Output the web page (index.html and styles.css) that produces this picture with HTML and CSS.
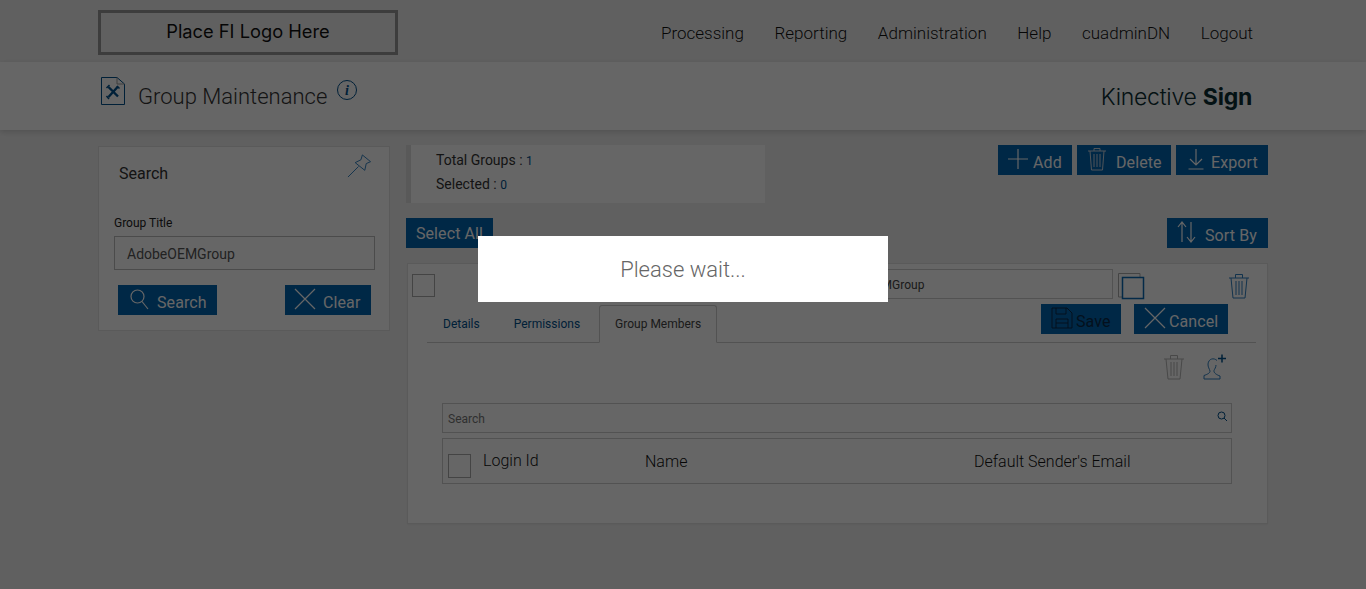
FILE: index.html
```html
<!DOCTYPE html>
<html lang="en">
<head>
<meta charset="utf-8">
<title>Group Maintenance</title>
<link rel="stylesheet" href="styles.css">
</head>
<body>
<header class="topbar">
  <div class="wrap topbar-inner">
    <div class="logo-box">Place FI Logo Here</div>
    <nav class="nav">
      <a>Processing</a><a>Reporting</a><a>Administration</a><a>Help</a><a>cuadminDN</a><a>Logout</a>
    </nav>
  </div>
</header>
<section class="subbar">
  <div class="wrap subbar-inner">
    <svg class="page-icon" width="26" height="30" viewBox="0 0 26 30" fill="none">
      <path d="M1.5 1.5H17L24.5 8V28.5H1.5Z" stroke="#00508c" stroke-width="1"/>
      <path d="M17 1.5V8H24.5" stroke="#999" stroke-width="1"/>
      <path d="M8.5 11L18 20.500M18 10.500L8.500 21" stroke="#00508c" stroke-width="2.400"/>
      <path d="M6.500 12L9.500 9M17 10L19.500 12.500M6.500 20L9 23" stroke="#00508c" stroke-width="1.500"/>
    </svg>
    <h1 class="page-title">Group Maintenance</h1>
    <svg class="info-icon" width="22" height="22" viewBox="0 0 22 22" fill="none">
      <circle cx="11" cy="11" r="9.5" stroke="#00508c" stroke-width="1"/>
      <text x="11" y="16" text-anchor="middle" class="info-i">i</text>
    </svg>
    <div class="brand">Kinective <b>Sign</b></div>
  </div>
</section>
<main class="wrap content">
  <aside class="panel">
    <div class="panel-head">
      <span>Search</span>
      <svg width="25" height="26" viewBox="0 0 26 26" fill="none" stroke="#2f7fc0" stroke-width="1">
        <path d="M16 1.500L24.500 8.500L20 10.500L18.500 17.500L8.500 9.500L14.500 6.500Z"/>
        <path d="M12 13.500L1 24.500"/>
      </svg>
    </div>
    <label class="field-label">Group Title</label>
    <div class="text-input">AdobeOEMGroup</div>
    <div class="panel-actions">
      <button class="btn btn-search">
        <svg width="20" height="24" viewBox="0 0 20 24" fill="none" stroke="#fff" stroke-width="1.200"><circle cx="8.500" cy="9.500" r="6.500"/><path d="M13 14.500L19 22"/></svg>
        <span class="lbl">Search</span>
      </button>
      <button class="btn btn-clear">
        <svg width="22" height="22" viewBox="0 0 22 22" fill="none" stroke="#fff" stroke-width="1.200"><path d="M1 1L21 21M21 1L1 21"/></svg>
        <span class="lbl">Clear</span>
      </button>
    </div>
  </aside>
  <section class="main-col">
    <div class="top-row">
      <div class="stats">
        <div>Total Groups : <span class="num">1</span></div>
        <div>Selected : <span class="num">0</span></div>
      </div>
      <div class="actions">
        <button class="btn btn-add">
          <svg width="22" height="22" viewBox="0 0 22 22" fill="none" stroke="#fff" stroke-width="1.200"><path d="M11 1V21M1 11H21"/></svg>
          <span class="lbl">Add</span>
        </button>
        <button class="btn btn-delete">
          <svg class="trash-b" width="20" height="24" viewBox="0 0 20 24" fill="none" stroke="#c8d4de" stroke-width="1"><path d="M1 4H19M7 4V1.500H13V4M3 4L4.500 23H15.500L17 4M7 7V20M10 7V20M13 7V20"/></svg>
          <span class="lbl">Delete</span>
        </button>
        <button class="btn btn-export">
          <svg width="16" height="22" viewBox="0 0 16 22" fill="none" stroke="#fff" stroke-width="1.200"><path d="M8 1V17M2 11L8 17L14 11M0.500 21H15.500"/></svg>
          <span class="lbl">Export</span>
        </button>
      </div>
    </div>
    <div class="second-row">
      <button class="btn btn-select">Select All</button>
      <button class="btn btn-sort">
        <svg width="20" height="24" viewBox="0 0 20 24" fill="none" stroke="#fff" stroke-width="1.200"><path d="M5 22V2M1 7L5 2L9 7M14 2V22M10 17L14 22L18 17"/></svg>
        <span class="lbl">Sort By</span>
      </button>
    </div>
    <article class="card">
      <div class="card-row">
        <span class="check"></span>
        <div class="title-input">AdobeOEMGroup</div>
        <svg class="copy-icon" width="27" height="27" viewBox="0 0 27 27" fill="none">
          <path d="M4 24H0.500V0.500H22V4" stroke="#aaa" stroke-width="1"/>
          <rect x="4.500" y="4.500" width="21" height="21" stroke="#0a6ab5" stroke-width="1.500"/>
        </svg>
        <svg class="trash-r" width="22" height="26" viewBox="0 0 22 26" fill="none" stroke="#2f7fc0" stroke-width="1"><path d="M1 5H21M7.500 5V1.500H14.500V5M3 5L5 25H17L19 5M8 8V22M11 8V22M14 8V22"/></svg>
      </div>
      <div class="tabs-row">
        <div class="tabs">
          <a class="tab">Details</a>
          <a class="tab">Permissions</a>
          <a class="tab active">Group Members</a>
        </div>
        <div class="tab-actions">
          <button class="btn btn-save">
            <svg width="22" height="22" viewBox="0 0 22 22" fill="none" stroke="#0a2a4a" stroke-width="1"><path d="M1 1H16L21 6V21H1ZM5 1V7H15V1M5 21V12H17V21M5 16H17"/></svg>
            <span class="lbl">Save</span>
          </button>
          <button class="btn btn-cancel">
            <svg width="22" height="22" viewBox="0 0 22 22" fill="none" stroke="#fff" stroke-width="1.200"><path d="M1 1L21 21M21 1L1 21"/></svg>
            <span class="lbl">Cancel</span>
          </button>
        </div>
      </div>
      <div class="member-tools">
        <svg width="22" height="26" viewBox="0 0 22 26" fill="none" stroke="#b5b5b5" stroke-width="1"><path d="M1 5H21M7.500 5V1.500H14.500V5M3 5L5 25H17L19 5M8 8V22M11 8V22M14 8V22"/></svg>
        <svg width="24" height="26" viewBox="0 0 24 26" fill="none" stroke="#2f7fc0" stroke-width="1"><path d="M14 6.500C11 3.500 5.500 4.500 5 10C4.800 13 6.500 15 7 17C7.300 19 4 20.500 1 21.500V25H17V22C14 21 10.500 19 11 16.500C11.500 15 13 13.500 13 11"/><path d="M19 0.500V8.500M15 4.500H23" stroke="#00508c" stroke-width="1.500"/></svg>
      </div>
      <div class="member-search">
        <span>Search</span>
        <svg class="member-search-icon" width="11" height="11" viewBox="0 0 11 11" fill="none" stroke="#00508c" stroke-width="1"><circle cx="4.500" cy="4.500" r="3.500"/><path d="M7 7L10 10"/></svg>
      </div>
      <div class="table-head">
        <span class="check check-head"></span>
        <span class="col-login">Login Id</span>
        <span class="col-name">Name</span>
        <span class="col-email">Default Sender's Email</span>
      </div>
    </article>
  </section>
</main>
<div class="overlay">
  <div class="modal">Please wait...</div>
</div>
</body>
</html>
```
FILE: styles.css
```css
* { box-sizing: border-box; }
html, body { margin: 0; height: 100%; }
body { background: #f1f1f1; font-family: Roboto, "Liberation Sans", sans-serif; color: #222; overflow: hidden; }
.wrap { width: 1170px; margin: 0 auto; }
.topbar { height: 62px; background: #f1f1f1; }
.topbar-inner { display: flex; justify-content: space-between; padding-top: 10px; }
.logo-box { width: 300px; height: 45px; border: 3px solid #999; display: flex; align-items: center; justify-content: center; padding-bottom: 3px; font: 400 18.300px Inter, sans-serif; color: #111; }
.nav { display: flex; gap: 30.600px; padding: 13px 15px 0 0; font-size: 17px; font-weight: 300; color: #111; }
.subbar { height: 68px; background: #fff; box-shadow: 0 2px 6px rgba(0,0,0,.16); }
.subbar-inner { display: flex; align-items: flex-start; }
.page-icon { margin: 14px 0 0 2px; }
.page-title { margin: 21px 0 0 12px; font-size: 22px; line-height: 28px; font-weight: 300; color: #333; }
.info-icon { margin: 17px 0 0 9px; }
.info-i { font: italic 700 14px "Liberation Serif", serif; fill: #00508c; }
.brand { margin: 21px 16px 0 auto; font: 300 23px/28px Inter, sans-serif; color: #0b2e33; letter-spacing: -.25px; }
.brand b { font-weight: 700; }
.content { display: flex; align-items: flex-start; padding-top: 16px; gap: 17px; }
.panel { width: 292px; height: 185px; background: #fff; border: 1px solid #e2e2e2; padding: 0 15px; flex: none; }
.panel-head { display: flex; justify-content: space-between; padding: 6px 2px 0 5px; height: 66px; font-size: 16px; color: #333; }
.panel-head span { margin-top: 11px; }
.field-label { display: block; font-size: 12px; line-height: 14px; color: #222; margin-top: 3px; }
.text-input { margin-top: 6px; width: 261px; height: 34px; border: 1px solid #bbb; padding: 0 12px; font-size: 14px; line-height: 34px; color: #555; background: #fff; }
.panel-actions { display: flex; justify-content: space-between; padding: 15px 4px 0; margin-right: -1px; width: 261px; }
.btn { display: inline-flex; align-items: center; height: 30px; border: 0; padding: 0; background: #0064b0; color: #fff; font: 400 16px Roboto, sans-serif; letter-spacing: .1px; white-space: nowrap; }
.btn svg { flex: none; margin-top: -2px; }
.lbl { padding-top: 4px; }
.btn-search { width: 99px; padding-left: 11px; gap: 8px; }
.btn-clear { width: 86px; padding-left: 9px; gap: 7px; }
.main-col { flex: 1; min-width: 0; }
.top-row { display: flex; justify-content: space-between; align-items: flex-start; margin-top: -1px; }
.stats { width: 359px; height: 58px; background: #fff; border-left: 5px solid #dedede; padding: 3.500px 0 0 25px; font-size: 14px; line-height: 23.500px; color: #333; margin-left: -1px; }
.num { font-size: 12px; color: #00508c; }
.actions { display: flex; gap: 5px; }
.btn-add { width: 74px; padding-left: 9px; gap: 4px; }
.btn-delete { width: 94px; padding-left: 10px; gap: 9px; }
.btn-export { width: 92px; padding-left: 12px; gap: 7px; }
.second-row { display: flex; justify-content: space-between; margin: 15px 0 15px -1px; }
.btn-select { width: 87px; justify-content: center; }
.btn-sort { width: 101px; padding-left: 10px; gap: 8px; }
.card { height: 261px; background: #fff; border: 1px solid #e2e2e2; padding: 0 4px; box-shadow: 0 1px 2px rgba(0,0,0,.05); }
.card-row { display: flex; align-items: flex-start; height: 41px; }
.check { display: block; width: 23px; height: 23px; border: 1px solid #aaa; background: #fff; flex: none; }
.card-row .check { margin-top: 10px; }
.title-input { width: 290px; height: 30px; margin: 5px 0 0 388px; border: 1px solid #ccc; padding-left: 8px; font-size: 12px; line-height: 30px; color: #444; }
.copy-icon { margin: 9px 0 0 5px; }
.trash-r { margin: 9px 0 0 83px; }
.tabs-row { display: flex; justify-content: space-between; height: 38px; margin: 0 7px 0 15px; border-bottom: 1px solid #ccc; }
.tabs { display: flex; }
.tab { padding: 11px 17px 0; font-size: 12px; line-height: 16px; color: #00508c; height: 38px; }
.tab:first-child { padding-left: 16px; }
.active { color: #444; background: #fff; border: 1px solid #ccc; border-bottom: 1px solid #fff; border-radius: 3px 3px 0 0; padding: 10px 15px 0; margin-left: 2px; height: 38px; }
.tab-actions { display: flex; gap: 13px; margin: -1px 28px 0 0; }
.btn-save { width: 80px; padding-left: 10px; gap: 3px; color: #0a2a4a; }
.btn-cancel { width: 94px; padding-left: 10px; gap: 3px; }
.member-tools { display: flex; justify-content: flex-end; gap: 18px; height: 60px; padding: 11px 36px 0 0; }
.member-search { display: flex; justify-content: space-between; align-items: center; margin: 0 31px 0 30px; height: 30px; border: 1px solid #ccc; padding: 2px 3px 0 5px; font-size: 12px; color: #777; }
.member-search-icon { margin-top: -6px; }
.table-head { display: grid; grid-template-columns: 35px 162px 329px 1fr; align-items: center; height: 46px; margin: 5px 31px 0 30px; border: 1px solid #ccc; padding-left: 5px; font-size: 16px; font-weight: 300; color: #111; }
.check-head { height: 24px; margin-top: 9px; }
.col-login { margin-top: -2px; }
.overlay { position: fixed; inset: 0; background: rgba(0,0,0,.6); }
.modal { position: absolute; left: 478px; top: 236px; width: 410px; height: 66px; background: #fff; display: flex; align-items: center; justify-content: center; font-size: 22px; font-weight: 300; color: #666; }
```
